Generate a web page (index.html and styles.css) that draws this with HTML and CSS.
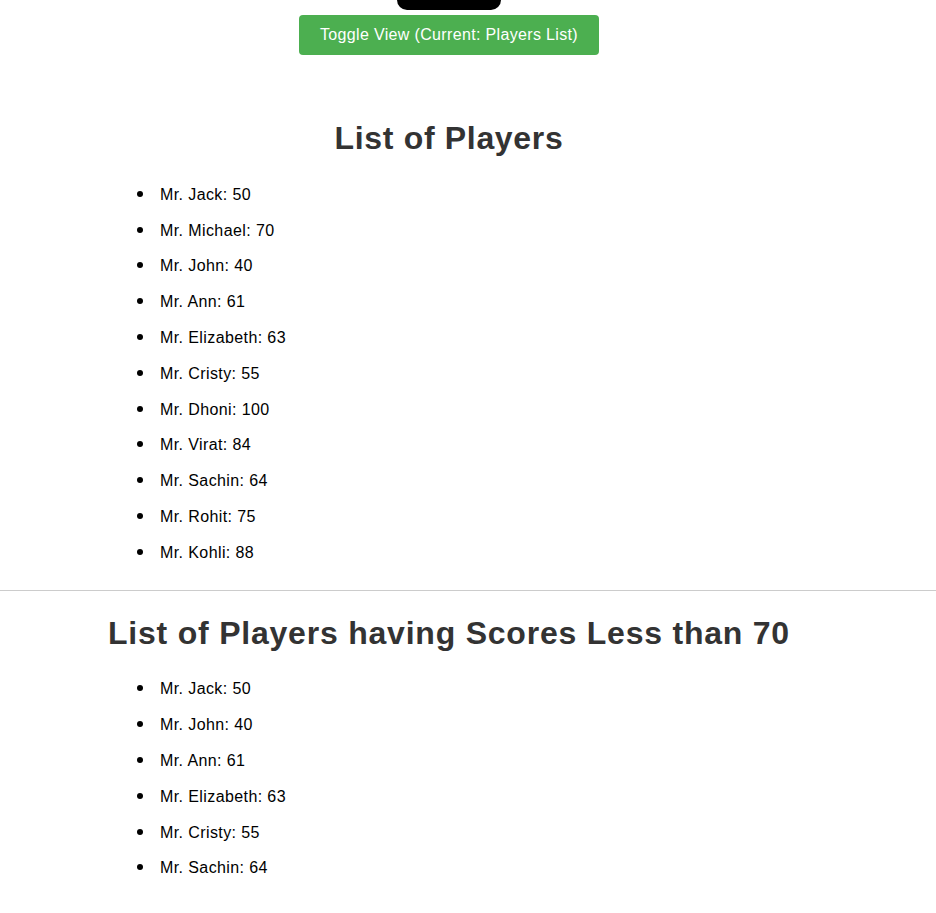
FILE: index.html
```html
<!DOCTYPE html>
<html>
<head>
<meta charset="utf-8">
<link rel="stylesheet" href="styles.css">
</head>
<body>
<div class="top">
  <div class="pill"></div>
  <button class="toggle">Toggle View (Current: Players List)</button>
</div>
<section class="block first">
  <h1 class="title">List of Players</h1>
  <ul class="players">
    <li>Mr. Jack: 50</li>
    <li>Mr. Michael: 70</li>
    <li>Mr. John: 40</li>
    <li>Mr. Ann: 61</li>
    <li>Mr. Elizabeth: 63</li>
    <li>Mr. Cristy: 55</li>
    <li>Mr. Dhoni: 100</li>
    <li>Mr. Virat: 84</li>
    <li>Mr. Sachin: 64</li>
    <li>Mr. Rohit: 75</li>
    <li>Mr. Kohli: 88</li>
  </ul>
</section>
<hr class="divider">
<section class="block second">
  <h1 class="title wide">List of Players having Scores Less than 70</h1>
  <ul class="players">
    <li>Mr. Jack: 50</li>
    <li>Mr. John: 40</li>
    <li>Mr. Ann: 61</li>
    <li>Mr. Elizabeth: 63</li>
    <li>Mr. Cristy: 55</li>
    <li>Mr. Sachin: 64</li>
  </ul>
</section>
</body>
</html>
```
FILE: styles.css
```css
html, body {
  margin: 0;
  padding: 0;
  background: #fff;
}
body {
  font-family: "Liberation Sans", Arial, sans-serif;
  color: #000;
}
.top {
  width: 898px;
  display: flex;
  flex-direction: column;
  align-items: center;
}
.pill {
  width: 104px;
  height: 10px;
  background: #000;
  border-radius: 0 0 10px 10px;
}
.toggle {
  margin-top: 5px;
  width: 300px;
  height: 40px;
  background: #4caf50;
  color: #fff;
  border: none;
  border-radius: 4px;
  font-family: "Liberation Sans", Arial, sans-serif;
  font-size: 16px;
  letter-spacing: 0.34px;
  padding: 0;
  cursor: pointer;
}
.block {
  width: 898px;
}
.title {
  margin: 0;
  text-align: center;
  font-size: 32px;
  font-weight: bold;
  color: #333;
  line-height: 37px;
  letter-spacing: 0.67px;
}
.title.wide {
  letter-spacing: 0.78px;
}
.first .title {
  margin-top: 65px;
}
.second .title {
  margin-top: 24px;
}
.players {
  margin: 20px 0 0 0;
  padding-left: 160px;
  list-style: none;
}
.players li {
  font-size: 16px;
  line-height: 18px;
  padding: 8.9px 0;
  letter-spacing: 0.4px;
}
.players li::before {
  content: "";
  display: inline-block;
  width: 6px;
  height: 6px;
  border-radius: 50%;
  background: #000;
  margin-left: -23px;
  margin-right: 17px;
  vertical-align: 3px;
}
.divider {
  margin: 19px 0 0 0;
  border: none;
  border-top: 1px solid #ccc;
  height: 0;
}
```
